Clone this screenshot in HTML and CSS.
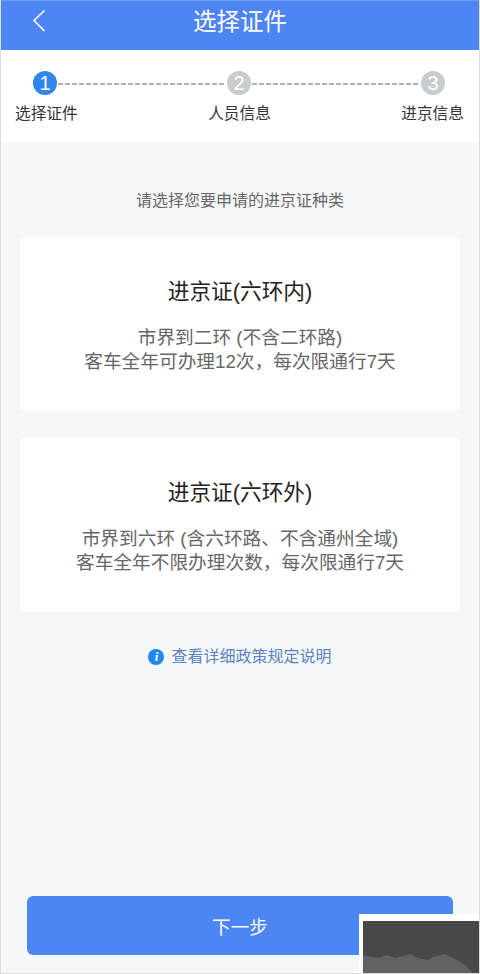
FILE: index.html
```html
<!DOCTYPE html>
<html lang="zh-CN">
<head>
    <meta charset="UTF-8">
    <meta name="viewport" content="width=device-width, initial-scale=1.0">
    <title>选择证件</title>
    <link rel="stylesheet" href="styles.css">
</head>
<body>

    <div class="page">
        <header class="topbar">
            <svg class="back" width="14" height="24" viewBox="0 0 14 24">
                <path d="M12.5 1.5 L2 11.5 L12.5 22" fill="none" stroke="#fff" stroke-width="1.6"/>
            </svg>
            <h1>选择证件</h1>
        </header>

        <section class="steps">
            <div class="track">
                <span class="dot active">1</span>
                <span class="line"></span>
                <span class="dot">2</span>
                <span class="line"></span>
                <span class="dot">3</span>
            </div>
            <div class="labels">
                <span>选择证件</span>
                <span>人员信息</span>
                <span>进京信息</span>
            </div>
        </section>

        <main class="content">
            <p class="hint">请选择您要申请的进京证种类</p>

            <div class="card">
                <h2>进京证(六环内)</h2>
                <p>市界到二环 (不含二环路)<br>客车全年可办理12次，每次限通行7天</p>
            </div>

            <div class="card">
                <h2>进京证(六环外)</h2>
                <p>市界到六环 (含六环路、不含通州全域)<br>客车全年不限办理次数，每次限通行7天</p>
            </div>

            <a class="policy" href="#">
                <span class="info">i</span>
                查看详细政策规定说明
            </a>

            <button class="next">下一步</button>
        </main>

        <!-- 右下角水印 -->
        <svg class="mark" width="121" height="60" viewBox="0 0 121 60">
            <rect width="121" height="60" fill="#fff"/>
            <rect x="4" y="7" width="117" height="53" fill="#484848"/>
            <path d="M4 41 L19 44 L28 41 L36 44 L51 40 L59 44 L69 46 L74 43 L86 40 L96 45 L106 51 L113 58 L114 60 L4 60 Z" fill="#626262"/>
        </svg>
    </div>

</body>
</html>
```

FILE: styles.css
```css
* {
    box-sizing: border-box;
    margin: 0;
    padding: 0;
}

body {
    font-family: "Liberation Sans", "Noto Sans CJK SC", sans-serif;
    background: #fff;
}

.page {
    position: relative;
    display: flex;
    flex-direction: column;
    width: 480px;
    height: 974px;
    overflow: hidden;
    border: 1px solid #dcdcdc;
    border-top: none;
    background: #f6f7f9;
}

.topbar {
    position: relative;
    height: 50px;
    background: #4d85f3;
    color: #fff;
    text-align: center;
    border-top: 1px solid #6f9bf0;
}

.topbar h1 {
    font-size: 23.5px;
    font-weight: 400;
    line-height: 42px;
}

.back {
    position: absolute;
    left: 31px;
    top: 8px;
}

.steps {
    height: 92px;
    padding-top: 21px;
    background: #fff;
}

.track {
    display: flex;
    align-items: center;
    padding: 0 34px 0 32px;
}

.dot {
    flex: none;
    width: 24px;
    height: 24px;
    border-radius: 50%;
    background: #c9cccf;
    color: #fff;
    font-size: 20px;
    line-height: 24px;
    text-align: center;
}

.dot.active {
    background: #2f86ee;
}

.line {
    flex: 1;
    height: 2px;
    margin: 1px 1px 0;
    background: repeating-linear-gradient(90deg, #b0b0b0 0 5px, transparent 5px 7px);
}

.labels {
    display: flex;
    justify-content: space-between;
    padding: 7px 15px 0 14px;
    font-size: 15.7px;
    line-height: 24px;
    color: #333;
}

.content {
    flex: 1;
    display: flex;
    flex-direction: column;
    padding: 47px 19px 18px;
}

.hint {
    font-size: 16px;
    line-height: 24px;
    color: #666;
    text-align: center;
    margin-bottom: 24px;
}

.card {
    height: 174px;
    margin-bottom: 27px;
    padding-top: 40px;
    border-radius: 5px;
    background: #fff;
    text-align: center;
}

.card h2 {
    font-size: 21.7px;
    font-weight: 400;
    line-height: 30px;
    color: #222;
    margin-bottom: 19px;
}

.card p {
    font-size: 18.7px;
    line-height: 24px;
    color: #666;
}

.policy {
    display: flex;
    align-items: center;
    justify-content: center;
    gap: 7px;
    margin-top: 6px;
    font-size: 16px;
    line-height: 24px;
    color: #5a84c0;
    text-decoration: none;
}

.info {
    width: 16px;
    height: 16px;
    border-radius: 50%;
    background: #1f88ec;
    color: #fff;
    font-family: "Liberation Serif", serif;
    font-size: 13px;
    font-style: italic;
    font-weight: 700;
    line-height: 16px;
    text-align: center;
}

.next {
    width: 426px;
    height: 59px;
    margin: auto 0 0 7px;
    border: none;
    border-radius: 6px;
    background: #4d85f3;
    color: #fff;
    font-family: inherit;
    font-size: 18.7px;
}

.mark {
    position: absolute;
    right: -1px;
    bottom: -1px;
}
```
